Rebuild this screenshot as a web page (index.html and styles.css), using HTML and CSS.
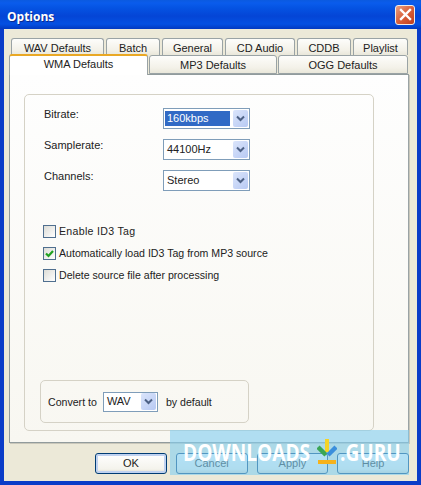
FILE: index.html
```html
<!DOCTYPE html>
<html lang="en">
<head>
<meta charset="utf-8">
<title>Options</title>
<link rel="stylesheet" href="styles.css">
</head>
<body>
<div class="window">
  <header class="titlebar">
    <span class="title">Options</span>
    <button class="close" aria-label="Close">
      <svg width="13" height="13" viewBox="0 0 13 13"><path d="M2 2 L11 11 M11 2 L2 11" stroke="#fff" stroke-width="2.4" stroke-linecap="square" fill="none"/></svg>
    </button>
  </header>
  <main class="client">
    <div class="tabs-back">
      <div class="tab w93">WAV Defaults</div>
      <div class="tab w54">Batch</div>
      <div class="tab w61">General</div>
      <div class="tab w70">CD Audio</div>
      <div class="tab w54">CDDB</div>
      <div class="tab w55">Playlist</div>
    </div>
    <div class="tabs-front">
      <div class="tab active">WMA Defaults</div>
      <div class="tab w128">MP3 Defaults</div>
      <div class="tab w130">OGG Defaults</div>
    </div>
    <section class="panel">
      <div class="group">
        <div class="form-row first">
          <label class="field-label">Bitrate:</label>
          <div class="select"><span class="value selected">160kbps</span><span class="drop"><svg width="9" height="7" viewBox="0 0 9 7"><path d="M1 1.5 L4.5 5 L8 1.5" stroke="#4d6185" stroke-width="2" fill="none"/></svg></span></div>
        </div>
        <div class="form-row">
          <label class="field-label">Samplerate:</label>
          <div class="select"><span class="value">44100Hz</span><span class="drop"><svg width="9" height="7" viewBox="0 0 9 7"><path d="M1 1.5 L4.5 5 L8 1.5" stroke="#4d6185" stroke-width="2" fill="none"/></svg></span></div>
        </div>
        <div class="form-row">
          <label class="field-label">Channels:</label>
          <div class="select"><span class="value">Stereo</span><span class="drop"><svg width="9" height="7" viewBox="0 0 9 7"><path d="M1 1.5 L4.5 5 L8 1.5" stroke="#4d6185" stroke-width="2" fill="none"/></svg></span></div>
        </div>
        <div class="checks">
          <div class="check-row"><span class="box"></span><span class="spaced">Enable ID3 Tag</span></div>
          <div class="check-row"><span class="box"><svg width="11" height="11" viewBox="0 0 11 11"><path d="M2 5.5 L4.5 8 L9 3" stroke="#21a121" stroke-width="2.2" fill="none"/></svg></span><span>Automatically load ID3 Tag from MP3 source</span></div>
          <div class="check-row"><span class="box"></span><span>Delete source file after processing</span></div>
        </div>
        <div class="convert">
          <span>Convert to</span>
          <div class="select small"><span class="value">WAV</span><span class="drop"><svg width="9" height="7" viewBox="0 0 9 7"><path d="M1 1.5 L4.5 5 L8 1.5" stroke="#4d6185" stroke-width="2" fill="none"/></svg></span></div>
          <span>by default</span>
        </div>
      </div>
    </section>
    <footer class="buttons">
      <button class="btn default">OK</button>
      <button class="btn">Cancel</button>
      <button class="btn">Apply</button>
      <button class="btn">Help</button>
    </footer>
  </main>
  <div class="watermark">
    <span class="wm-text wm-downloads">DOWNLOADS</span>
    <svg class="wm-logo" width="20" height="25" viewBox="0 0 20 25">
      <path d="M10 0 V13" stroke="#f5d327" stroke-width="4" fill="none"/>
      <path d="M1 8 L9 16" stroke="#3aa655" stroke-width="4.5" fill="none"/>
      <path d="M19 8 L11 16" stroke="#3b8fdc" stroke-width="4.5" fill="none"/>
      <rect x="1" y="21" width="18" height="4" fill="#f6b21b"/>
    </svg>
    <span class="wm-text wm-guru">.GURU</span>
  </div>
</div>
</body>
</html>
```
FILE: styles.css
```css
* { box-sizing: border-box; }
html, body { margin: 0; padding: 0; }
body {
  width: 421px;
  height: 485px;
  overflow: hidden;
  font-family: "Liberation Sans", Arial, sans-serif;
  font-size: 11px;
  color: #222;
}
.window {
  position: relative;
  width: 421px;
  height: 485px;
  display: flex;
  flex-direction: column;
  padding: 0 4px 4px;
  background: #0a3cc8;
}
.titlebar {
  flex: none;
  height: 29px;
  margin: 0 -4px;
  padding: 3px 6px 0 7px;
  display: flex;
  align-items: center;
  justify-content: space-between;
  background: linear-gradient(#0b5ae0 0, #0a5cec 3px, #0553e2 8px, #0445d6 16px, #0450e2 24px, #0239c0 29px);
}
.title {
  color: #fff;
  font-family: "Open Sans", sans-serif;
  font-weight: 700;
  font-size: 12px;
  text-shadow: 1px 1px 0 #0a2a90;
}
.close {
  width: 20px;
  height: 20px;
  margin-top: -3px;
  padding: 0;
  display: flex;
  align-items: center;
  justify-content: center;
  border: 1px solid #f0ece8;
  border-radius: 3px;
  background: linear-gradient(135deg, #e8a083, #d9603a 50%, #bf3d1c);
}
.client {
  flex: 1;
  display: flex;
  flex-direction: column;
  padding: 9px 8px 7px 5px;
  background: #ece9d8;
  min-height: 0;
}
.tabs-back {
  flex: none;
  display: flex;
  gap: 2px;
  height: 17px;
  margin-left: 2px;
}
.tabs-front {
  flex: none;
  display: flex;
  gap: 1px;
  height: 19px;
  position: relative;
  z-index: 1;
}
.tab {
  display: flex;
  align-items: center;
  justify-content: center;
  padding-top: 1px;
  height: 100%;
  border: 1px solid #9aa3a5;
  border-bottom: 0;
  border-radius: 3px 3px 0 0;
  background: linear-gradient(#fdfdfb, #f3f1e8 70%, #e9e7da);
}
.tabs-front .tab {
  border-bottom: 1px solid #9aa3a5;
  border-radius: 3px 3px 0 0;
}
.tabs-front .tab.active {
  width: 139px;
  height: 21px;
  margin-top: -1px;
  padding: 0 0 3px;
  border-top: 2px solid #e9a825;
  border-bottom: 0;
  background: #fff;
}
.w93 { width: 93px; }
.w54 { width: 54px; }
.w61 { width: 61px; }
.w70 { width: 70px; }
.w55 { width: 55px; }
.w128 { width: 128px; }
.w130 { width: 130px; }
.panel {
  flex: none;
  width: 400px;
  height: 369px;
  padding: 19px 14px 0;
  border: 1px solid #919b9c;
  border-right-color: #9aa3a5;
  background: linear-gradient(#fefefe, #f8f7f1);
  box-shadow: 1px 1px 0 #c9c7ba;
}
.group {
  display: flex;
  flex-direction: column;
  width: 350px;
  height: 337px;
  padding: 13px 0 7px 19px;
  border: 1px solid #d5d2c6;
  border-radius: 5px;
}
.form-row {
  display: flex;
  align-items: flex-start;
  height: 21px;
  margin-top: 10px;
}
.form-row.first { margin-top: 0; }
.field-label {
  width: 119px;
  line-height: 13px;
}
.select {
  display: flex;
  align-items: center;
  justify-content: space-between;
  width: 87px;
  height: 21px;
  padding: 1px;
  border: 1px solid #7f9db9;
  background: #fff;
}
.value {
  flex: 1;
  margin-right: 3px;
  padding-left: 2px;
  height: 15px;
  line-height: 15px;
}
.value.selected {
  background: #316ac5;
  color: #fff;
}
.drop {
  flex: none;
  width: 15px;
  height: 17px;
  display: flex;
  align-items: center;
  justify-content: center;
  border-radius: 2px;
  background: linear-gradient(135deg, #dbe5fb, #b7c9f3);
}
.checks {
  display: flex;
  flex-direction: column;
  gap: 8px;
  margin-top: 33px;
  margin-left: -1px;
  font-size: 10.6px;
}
.spaced { letter-spacing: 0.3px; }
.check-row {
  display: flex;
  align-items: center;
  gap: 3px;
  height: 14px;
}
.box {
  flex: none;
  width: 13px;
  height: 13px;
  display: flex;
  align-items: center;
  justify-content: center;
  border: 1px solid #4f6f8f;
  background: linear-gradient(135deg, #dcdcd6, #fff);
}
.convert {
  display: flex;
  align-items: center;
  width: 209px;
  height: 43px;
  margin-top: auto;
  margin-left: -4px;
  padding-left: 7px;
  border: 1px solid #d5d2c6;
  border-radius: 5px;
  font-size: 10.6px;
}
.select.small {
  width: 55px;
  height: 20px;
  margin: 0 8px 0 6px;
  font-size: 11px;
}
.buttons {
  flex: none;
  display: flex;
  gap: 9px;
  margin-top: 10px;
  padding-left: 86px;
}
.btn {
  width: 72px;
  height: 21px;
  padding: 0 0 2px;
  font: inherit;
  color: #222;
  border: 1px solid #003c74;
  border-radius: 3px;
  background: linear-gradient(#fff, #f4f3ec 80%, #dcd8c9);
}
.btn.default {
  box-shadow: inset 0 0 0 2px #c0d2f0;
}
.watermark {
  position: absolute;
  left: 170px;
  top: 430px;
  width: 239px;
  height: 45px;
  display: flex;
  align-items: center;
  padding: 0 0 0 13px;
  background: rgba(132, 206, 240, 0.62);
  color: #fff;
  font-family: "Open Sans", sans-serif;
  font-weight: 700;
  font-size: 23px;
}
.wm-text {
  display: block;
  flex: none;
  white-space: nowrap;
  transform-origin: left center;
  transform: scaleX(0.83);
  margin-top: -2px;
}
.wm-downloads { width: 129px; }
.wm-guru { width: 56px; }
.wm-logo { flex: none; margin: -2px 3px 0 5px; }
```
